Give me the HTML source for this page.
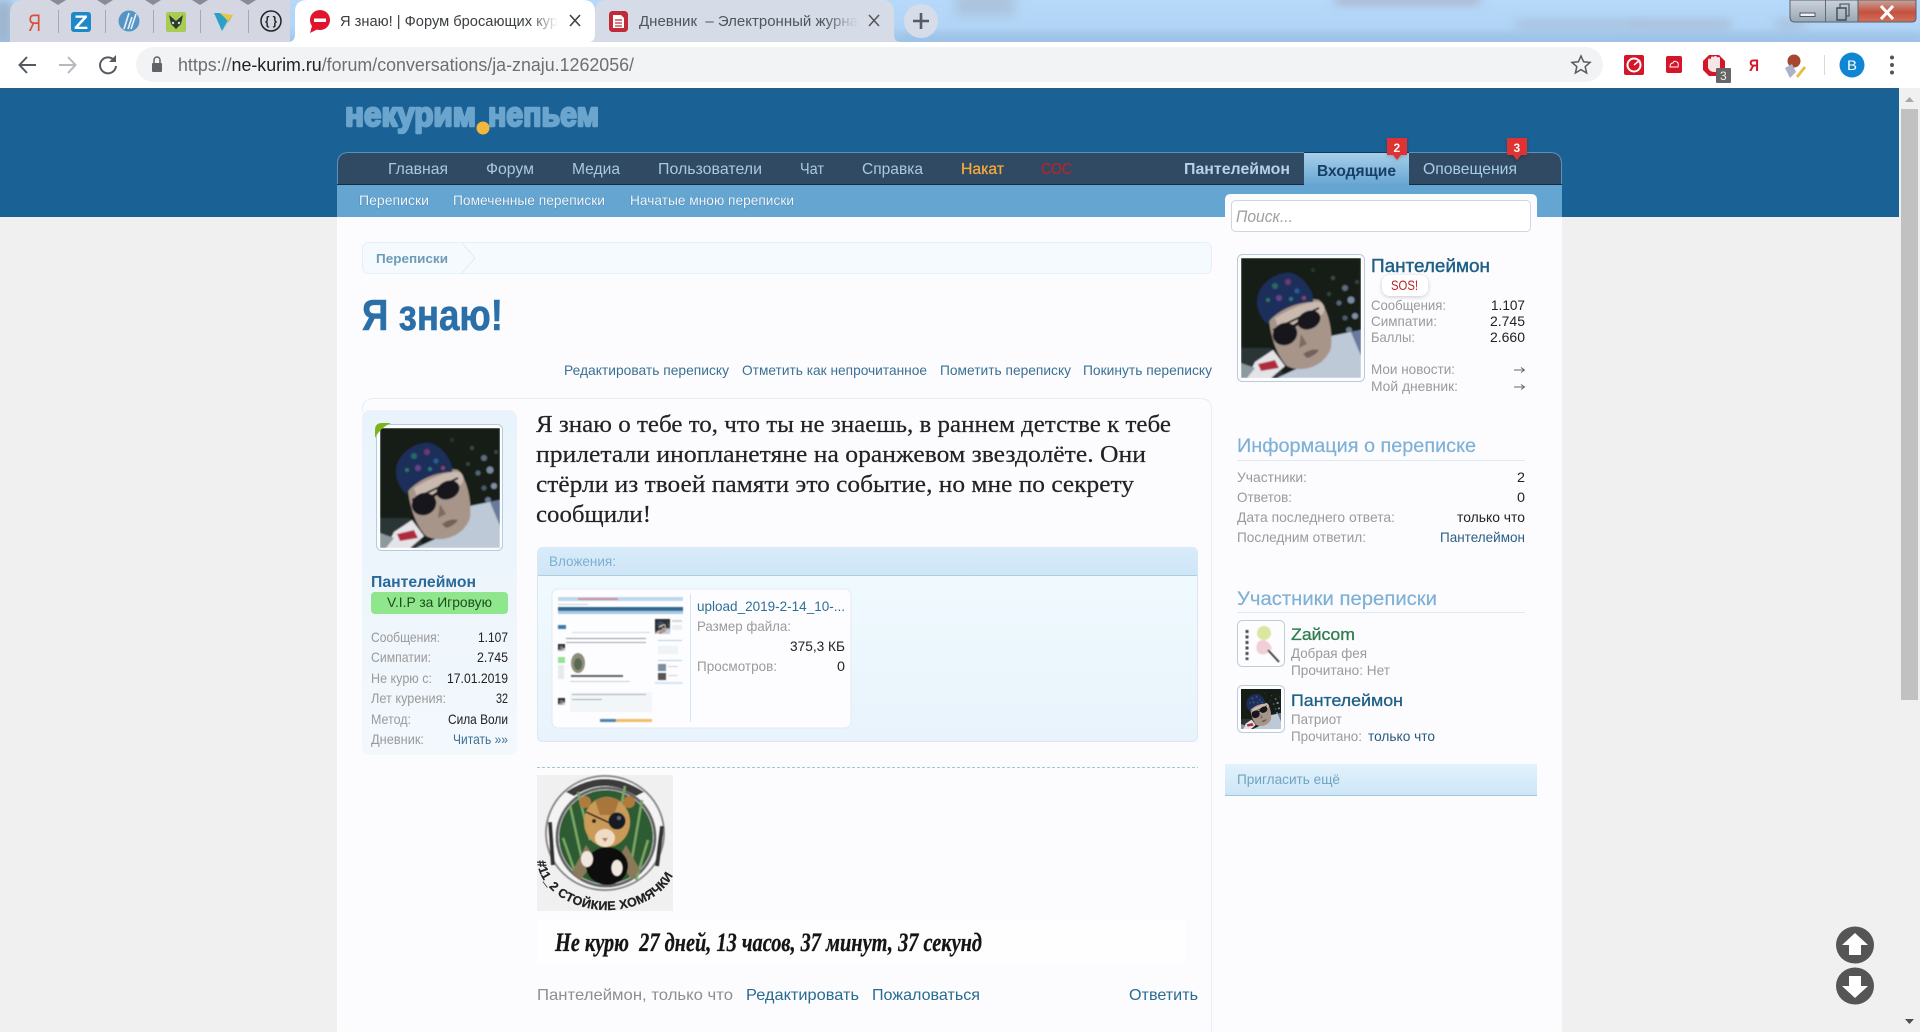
<!DOCTYPE html>
<html lang="ru"><head><meta charset="utf-8"><title>Я знаю! | Форум бросающих курить</title>
<style>
html,body{margin:0;padding:0;background:#f0f0f0;overflow:hidden;width:1920px;height:1032px}
svg{display:block}
text{font-family:"Liberation Sans","Noto Sans CJK SC",sans-serif;white-space:pre}
.g{fill:#9a9a9a;font-size:14px}.k{fill:#222;font-size:14px}.l{fill:#3a7194;font-size:14px}
.n{fill:#a9c9e1;font-size:16px}.s{fill:#f2f8fc;font-size:14px}
.h{fill:#7fb0d6;font-size:19px;stroke:#7fb0d6;stroke-width:.2}
.f{fill:#2a6a90;font-size:16px}
.m{fill:#222;font-family:"Liberation Serif",serif;font-size:24px;stroke:#222;stroke-width:.2}
</style></head><body>
<svg xmlns="http://www.w3.org/2000/svg" width="1920" height="1032" viewBox="0 0 1920 1032">
<defs>
<linearGradient id="sky" x1="0" y1="0" x2="0" y2="1"><stop offset="0" stop-color="#b6d9fa"/><stop offset=".65" stop-color="#b2d5f6"/><stop offset="1" stop-color="#9fc4e8"/></linearGradient>
<linearGradient id="inb" x1="0" y1="0" x2="0" y2="1"><stop offset="0" stop-color="#a9d0ea"/><stop offset="1" stop-color="#67a6d2"/></linearGradient>
<linearGradient id="ub" x1="0" y1="0" x2="0" y2="1"><stop offset="0" stop-color="#e8f3fb"/><stop offset="1" stop-color="#f3f8fd"/></linearGradient>
<linearGradient id="ah" x1="0" y1="0" x2="0" y2="1"><stop offset="0" stop-color="#d8ecfa"/><stop offset="1" stop-color="#cfe6f7"/></linearGradient>
<linearGradient id="ab" x1="0" y1="0" x2="0" y2="1"><stop offset="0" stop-color="#f1fbff"/><stop offset="1" stop-color="#e8f3fb"/></linearGradient>
<linearGradient id="inv" x1="0" y1="0" x2="0" y2="1"><stop offset="0" stop-color="#e2f2fc"/><stop offset="1" stop-color="#cde6f6"/></linearGradient>
<linearGradient id="close" x1="0" y1="0" x2="0" y2="1"><stop offset="0" stop-color="#c8a49c"/><stop offset=".55" stop-color="#c4523e"/><stop offset="1" stop-color="#d2705c"/></linearGradient>
<linearGradient id="win" x1="0" y1="0" x2="0" y2="1"><stop offset="0" stop-color="#ccd4dc"/><stop offset="1" stop-color="#98a6b4"/></linearGradient>
<linearGradient id="fade1" gradientUnits="userSpaceOnUse" x1="530" y1="0" x2="558" y2="0"><stop offset="0" stop-color="#3c4043"/><stop offset="1" stop-color="#ffffff"/></linearGradient>
<linearGradient id="fade2" gradientUnits="userSpaceOnUse" x1="825" y1="0" x2="858" y2="0"><stop offset="0" stop-color="#50555a"/><stop offset="1" stop-color="#d6dce7"/></linearGradient>
<filter id="b6" x="-30%" y="-200%" width="160%" height="500%"><feGaussianBlur stdDeviation="5"/></filter>
<filter id="b1" x="-10%" y="-10%" width="120%" height="120%"><feGaussianBlur stdDeviation=".8"/></filter>
<filter id="b05" x="-5%" y="-5%" width="110%" height="110%"><feGaussianBlur stdDeviation=".45"/></filter>
<filter id="sh" x="-20%" y="-30%" width="140%" height="170%"><feDropShadow dx="0" dy="1" stdDeviation="2" flood-color="#000" flood-opacity=".2"/></filter>
<symbol id="photo" viewBox="0 0 120 120">
<g filter="url(#b1)">
<rect width="120" height="120" fill="#141e15"/>
<circle cx="92" cy="20" r="2" fill="#3c4c44"/><circle cx="104" cy="30" r="3" fill="#5c6c7c"/><circle cx="110" cy="42" r="3.500" fill="#7a8aa0"/><circle cx="98" cy="45" r="2.500" fill="#55667a"/><circle cx="114" cy="58" r="3" fill="#8090a8"/><circle cx="104" cy="60" r="2.500" fill="#4c5c6c"/><circle cx="116" cy="24" r="2" fill="#34443c"/><circle cx="88" cy="36" r="2" fill="#33443a"/><circle cx="108" cy="72" r="3" fill="#6a7a94"/><circle cx="72" cy="12" r="2" fill="#28382c"/>
<path d="M0 90H30L44 120H0Z" fill="#2a3634"/>
<path d="M36 120L70 104 90 78 120 72V120Z" fill="#bdc9d7"/>
<path d="M110 74L120 98V72Z" fill="#6a7a9c"/>
<path d="M28 62C40 48 60 38 78 42 86 50 92 70 90 90 84 108 62 116 46 108 36 98 30 80 28 62Z" fill="#a8958a"/>
<path d="M34 60C50 50 70 42 80 44 86 50 84 56 76 60 60 66 46 68 38 72Z" fill="#c9b9af"/>
<path d="M16 44C16 26 36 13 50 15 62 18 74 34 72 44 56 44 36 52 26 66 20 60 16 52 16 44Z" fill="#1d2f5a"/>
<g opacity=".75"><circle cx="34" cy="28" r="3" fill="#2c7a6a"/><circle cx="47" cy="24" r="3" fill="#8a3a7a"/><circle cx="56" cy="33" r="2.500" fill="#2a6aa8"/><circle cx="38" cy="40" r="3" fill="#7a4a9a"/><circle cx="27" cy="42" r="2" fill="#3a8a5a"/><circle cx="63" cy="40" r="2" fill="#a8506a"/><circle cx="50" cy="41" r="2" fill="#2e8a8a"/></g>
<ellipse cx="44" cy="76" rx="12.500" ry="11" fill="#15151c" transform="rotate(-25 44 76)"/>
<ellipse cx="68" cy="62" rx="12" ry="9" fill="#15151c" transform="rotate(-25 68 62)"/>
<path d="M50 70L62 62" stroke="#15151c" stroke-width="3"/>
<path d="M32 72L78 50" stroke="#15151c" stroke-width="2"/>
<path d="M60 76L66 86 58 90Z" fill="#7f6a60"/>
<path d="M62 96Q70 90 78 92 74 98 66 100Z" fill="#75605a"/>
<path d="M14 104L32 92 44 108 30 120H6Z" fill="#e4e4e8"/><path d="M17 106L34 102 38 110 20 113Z" fill="#b02a3e"/>
<path d="M0 105L14 110 6 120H0Z" fill="#8c9aa0"/>
</g>
</symbol>
</defs>

<!-- page -->
<rect width="1920" height="1032" fill="#f0f0f0"/>

<!-- window top -->
<rect width="1920" height="42" fill="url(#sky)"/>
<g filter="url(#b6)">
<rect x="-6" y="0" width="18" height="42" fill="#9db4cc"/>
<rect x="955" y="-6" width="60" height="22" fill="#a8bcd2" opacity=".7"/>
<rect x="1335" y="-4" width="145" height="8" fill="#a89cb0" opacity=".75"/>
<rect x="1515" y="21" width="120" height="6" fill="#9fb2c8" opacity=".8"/>
<rect x="1630" y="21" width="100" height="6" fill="#a0a8bc" opacity=".8"/>
<rect x="1775" y="21" width="30" height="6" fill="#a0a8bc" opacity=".7"/>
<rect x="900" y="35" width="1020" height="9" fill="#9cc1e6"/>
</g>
<!-- pinned tabs -->
<path d="M10 42V14Q10 0 24 0H290V42Z" fill="#d4d7e1"/>
<path d="M50 0L58 5 66 0ZM97 0L105 5 113 0ZM145 0L153 5 161 0ZM192 0L200 5 208 0ZM240 0L248 5 256 0Z" fill="#868c9a"/>
<g stroke="#a5a9b3" stroke-width="1"><path d="M58.500 10V33M105.500 10V33M153.500 10V33M200.500 10V33M248.500 10V33"/></g>
<text x="28" y="31" font-size="24" fill="#d94f3c" textLength="13" lengthAdjust="spacingAndGlyphs">Я</text>
<rect x="71" y="12" width="20" height="20" rx="3" fill="#1e88c8"/>
<text x="74" y="29" font-size="19" font-weight="bold" fill="#fff" textLength="14" lengthAdjust="spacingAndGlyphs">Z</text>
<circle cx="129" cy="21" r="10.500" fill="#5495c4"/>
<path d="M124 29L129 13M128 29L132 17M131 29L136 14" stroke="#e8f2f8" stroke-width="1.600" fill="none"/>
<rect x="166" y="12" width="20" height="20" rx="2" fill="#a9cb55"/>
<path d="M169 15L176 21 183 15 181 24 176 29 171 24Z" fill="#2b3d2a"/><circle cx="173" cy="23" r="1.200" fill="#cde"/><circle cx="179" cy="23" r="1.200" fill="#cde"/>
<path d="M214 13L222 31 228 20 220 13Z" fill="#2aa0c8"/><path d="M220 13L233 15 229 22Z" fill="#e4c64a"/><path d="M222 31L229 20 233 15Z" fill="#58b868"/>
<circle cx="271" cy="21" r="10" fill="none" stroke="#222" stroke-width="1.500"/>
<text x="265" y="25" font-size="12" font-weight="bold" fill="#222" textLength="12" lengthAdjust="spacingAndGlyphs">{ }</text>
<!-- active tab -->
<path d="M288 42Q295 42 295 34V12Q295 0 307 0H583Q595 0 595 12V34Q595 42 602 42Z" fill="#fff"/>
<circle cx="320" cy="20" r="10" fill="#e0142c"/><path d="M312 26L310 33 318 29Z" fill="#e0142c"/><rect x="314" y="18.500" width="12" height="3.500" fill="#fff"/>
<text x="340" y="26" font-size="15" fill="url(#fade1)" textLength="218" lengthAdjust="spacingAndGlyphs">Я знаю! | Форум бросающих кур</text>
<path d="M570 15L580 26M580 15L570 26" stroke="#444" stroke-width="1.600"/>
<!-- tab 2 -->
<path d="M595 34V12Q595 0 607 0H882Q894 0 894 12V34Q894 42 901 42H588Q595 42 595 34Z" fill="#d6dce7"/>
<rect x="609" y="11" width="19" height="21" rx="3.500" fill="#c02a3a"/>
<path d="M613 15H621L624 18V28H613Z" fill="#fff"/><path d="M615 20H622M615 23H622M615 26H622" stroke="#c02a3a" stroke-width="1.200"/>
<text x="639" y="26" font-size="15" fill="url(#fade2)" textLength="219" lengthAdjust="spacingAndGlyphs">Дневник  – Электронный журна</text>
<path d="M869 15L879 26M879 15L869 26" stroke="#555" stroke-width="1.500"/>
<!-- new tab -->
<circle cx="921" cy="21" r="17" fill="#d6dde8"/>
<path d="M921 13V29M913 21H929" stroke="#555c66" stroke-width="2.600"/>
<!-- window controls -->
<path d="M1790 0V17Q1790 22 1795 22H1858V0Z" fill="url(#win)" stroke="#56626e"/>
<path d="M1858 0V22H1912Q1916 22 1916 18V0Z" fill="url(#close)" stroke="#56626e"/>
<path d="M1825.500 0V22" stroke="#5f6b78"/>
<rect x="1800" y="13" width="15" height="3.500" fill="#eef2f6" stroke="#556"/>
<path d="M1837 8H1846V20H1837Z" fill="none" stroke="#444c56" stroke-width="1.400"/>
<path d="M1840 8V4H1849V16H1846" fill="none" stroke="#444c56" stroke-width="1.100"/>
<path d="M1881 6L1893 19M1893 6L1881 19" stroke="#fff" stroke-width="3"/>

<!-- toolbar -->
<rect y="42" width="1920" height="46" fill="#fff"/>
<path d="M36 65H20M27 57L19.500 65 27 73" fill="none" stroke="#555a60" stroke-width="2"/>
<path d="M59 65H75M68 57L75.500 65 68 73" fill="none" stroke="#b6babf" stroke-width="2"/>
<path d="M114 60A8 8 0 1 0 116 66" fill="none" stroke="#555a60" stroke-width="2"/><path d="M116 55V62H109Z" fill="#555a60"/>
<rect x="136" y="47" width="1467" height="35" rx="17.500" fill="#f1f3f4"/>
<rect x="152" y="63" width="10" height="9" rx="1" fill="#5f6368"/><path d="M154 63V60A3 3 0 0 1 160 60V63" fill="none" stroke="#5f6368" stroke-width="1.500"/>
<text x="178" y="71" font-size="18" fill="#6c7074" textLength="456" lengthAdjust="spacingAndGlyphs"><tspan>https://</tspan><tspan fill="#202124">ne-kurim.ru</tspan><tspan>/forum/conversations/ja-znaju.1262056/</tspan></text>
<path d="M1581 56L1583.600 61.800 1590 62.400 1585.200 66.600 1586.600 73 1581 69.600 1575.400 73 1576.800 66.600 1572 62.400 1578.400 61.800Z" fill="none" stroke="#555a60" stroke-width="1.500"/>
<rect x="1624" y="55" width="20" height="20" rx="2" fill="#d4152a"/><circle cx="1634" cy="65" r="6.500" fill="none" stroke="#fff" stroke-width="2"/><path d="M1634 65L1640 60" stroke="#fff" stroke-width="1.500"/>
<rect x="1666" y="56" width="16" height="17" rx="2" fill="#d4152a"/><path d="M1670 67Q1670 63 1673 63 1674 60 1677 62 1679 63 1678 67Z" fill="none" stroke="#fff" stroke-width="1"/>
<path d="M1709 55H1719L1725 61V70L1719 76H1709L1703 70V61Z" fill="#d4152a"/>
<path d="M1708 64V60Q1708 58.500 1709.500 58.500 1711 58.500 1711 60V57.500Q1711 56.500 1712.500 56.500 1714 56.500 1714 57.500V57Q1714 56 1715.500 56 1717 56 1717 57.500V58Q1717 57 1718.500 57 1720 57 1720 58.500V68Q1720 72 1714 72 1710 72 1708 68Z" fill="#f6e6e6"/>
<rect x="1716" y="68" width="15" height="15" rx="1" fill="#666"/><text x="1720" y="80" font-size="12" fill="#eee">3</text>
<text x="1749" y="71" font-size="17" fill="#d4152a" font-weight="bold" textLength="10" lengthAdjust="spacingAndGlyphs">Я</text>
<circle cx="1794" cy="61" r="6.500" fill="#a8472f"/><path d="M1785 68L1792 64 1796 72 1790 78Z" fill="#a8b4cc"/><path d="M1796 76L1804 66 1806 68 1798 78Z" fill="#e0c040"/>
<path d="M1824.500 55V75" stroke="#d8dadc"/>
<circle cx="1852" cy="65" r="12.500" fill="#0e86d4"/><text x="1847" y="70" font-size="14" fill="#fff" textLength="10" lengthAdjust="spacingAndGlyphs">В</text>
<circle cx="1892" cy="57.500" r="2" fill="#555"/><circle cx="1892" cy="65" r="2" fill="#555"/><circle cx="1892" cy="72.500" r="2" fill="#555"/>

<!-- site header -->
<rect y="88" width="1899" height="129" fill="#1a6295"/>
<rect y="88" width="1899" height="1" fill="#2a5a80"/>
<!-- logo -->
<text x="345" y="126" font-size="34" font-weight="bold" fill="#6ba5cd" stroke="#6ba5cd" stroke-width="2.400" stroke-linejoin="round" textLength="131" lengthAdjust="spacingAndGlyphs">некурим</text>
<text x="488" y="126" font-size="34" font-weight="bold" fill="#6ba5cd" stroke="#6ba5cd" stroke-width="2.400" stroke-linejoin="round" textLength="111" lengthAdjust="spacingAndGlyphs">непьем</text>
<circle cx="483" cy="128" r="6.500" fill="#f5b63c"/>
<!-- nav -->
<path d="M337.500 185V164Q337.500 152.500 349 152.500H1550Q1561.500 152.500 1561.500 164V185Z" fill="#2f4a62" stroke="#5c93bd" stroke-width="1"/>
<rect x="337" y="184" width="1225" height="1.500" fill="#132c44"/>
<rect x="337" y="185" width="1225" height="32" fill="#65a5d1"/>
<text class="n" x="388" y="174" textLength="60" lengthAdjust="spacingAndGlyphs">Главная</text>
<text class="n" x="486" y="174" textLength="48" lengthAdjust="spacingAndGlyphs">Форум</text>
<text class="n" x="572" y="174" textLength="48" lengthAdjust="spacingAndGlyphs">Медиа</text>
<text class="n" x="658" y="174" textLength="104" lengthAdjust="spacingAndGlyphs">Пользователи</text>
<text class="n" x="800" y="174" textLength="24" lengthAdjust="spacingAndGlyphs">Чат</text>
<text class="n" x="862" y="174" textLength="61" lengthAdjust="spacingAndGlyphs">Справка</text>
<text x="961" y="174" font-size="16" fill="#f2a93a" stroke="#f2a93a" stroke-width=".3" textLength="43" lengthAdjust="spacingAndGlyphs">Накат</text>
<text x="1041" y="174" font-size="16" fill="#c81e28" textLength="31" lengthAdjust="spacingAndGlyphs">СОС</text>
<text x="1184" y="174" font-size="16" font-weight="bold" fill="#b5d2e8" textLength="106" lengthAdjust="spacingAndGlyphs">Пантелеймон</text>
<rect x="1304" y="152" width="105" height="33" fill="url(#inb)"/>
<path d="M1304 152.500H1409" stroke="#123a5c"/>
<text x="1317" y="176" font-size="16" font-weight="bold" fill="#173e66" textLength="79" lengthAdjust="spacingAndGlyphs">Входящие</text>
<text x="1423" y="174" font-size="16" fill="#a8cde8" textLength="94" lengthAdjust="spacingAndGlyphs">Оповещения</text>
<g filter="url(#sh)"><path d="M1387 138H1407V155H1401L1397 160 1393 155H1387Z" fill="#e03232"/><path d="M1507 138H1527V155H1521L1517 160 1513 155H1507Z" fill="#e03232"/></g>
<text x="1393.500" y="152" font-size="12" font-weight="bold" fill="#fff">2</text>
<text x="1513.500" y="152" font-size="12" font-weight="bold" fill="#fff">3</text>
<!-- subnav -->
<g style="paint-order:stroke"><text class="s" x="359" y="205" stroke="#4a88b4" stroke-width=".8" textLength="70" lengthAdjust="spacingAndGlyphs">Переписки</text>
<text class="s" x="453" y="205" stroke="#4a88b4" stroke-width=".8" textLength="152" lengthAdjust="spacingAndGlyphs">Помеченные переписки</text>
<text class="s" x="630" y="205" stroke="#4a88b4" stroke-width=".8" textLength="164" lengthAdjust="spacingAndGlyphs">Начатые мною переписки</text></g>

<!-- content -->
<rect x="337" y="217" width="1225" height="815" fill="#fcfcff"/>
<path d="M1225 217V200Q1225 194 1231 194H1531Q1537 194 1537 200V217Z" fill="#fcfcff"/>
<rect x="1231.500" y="200.500" width="299" height="31" rx="4" fill="#fff" stroke="#d0d6dc"/>
<text x="1236" y="222" font-size="17" font-style="italic" fill="#a0a0a0" textLength="57" lengthAdjust="spacingAndGlyphs">Поиск...</text>

<!-- breadcrumb -->
<rect x="362.500" y="242.500" width="849" height="31" rx="6" fill="#f5fafe" stroke="#e6f0f8"/>
<path d="M462 243L475 258 462 273" fill="none" stroke="#e2edf5"/>
<text x="376" y="263" font-size="13" font-weight="bold" fill="#6d9bb8" textLength="72" lengthAdjust="spacingAndGlyphs">Переписки</text>

<!-- title -->
<text x="362" y="330" font-size="44" font-weight="bold" fill="#2a6fa8" stroke="#2a6fa8" stroke-width=".6" textLength="141" lengthAdjust="spacingAndGlyphs">Я знаю!</text>
<text class="l" x="564" y="375" textLength="165" lengthAdjust="spacingAndGlyphs">Редактировать переписку</text>
<text class="l" x="742" y="375" textLength="185" lengthAdjust="spacingAndGlyphs">Отметить как непрочитанное</text>
<text class="l" x="940" y="375" textLength="131" lengthAdjust="spacingAndGlyphs">Пометить переписку</text>
<text class="l" x="1083" y="375" textLength="129" lengthAdjust="spacingAndGlyphs">Покинуть переписку</text>

<!-- post frame -->
<path d="M362.500 412V410Q362.500 398.500 374 398.500H1200Q1211.500 398.500 1211.500 410V1032" fill="none" stroke="#e4eff7"/>
<!-- user box -->
<rect x="362" y="410" width="155" height="345" rx="8" fill="url(#ub)"/>
<rect x="376.500" y="424.500" width="126" height="126" rx="5" fill="#fcfcff" stroke="#b8cbd8"/>
<use href="#photo" x="380" y="428" width="120" height="120"/>
<path d="M375 438V430Q375 423 382 423H391Q380 428 375 438Z" fill="#7cb518"/>
<text x="371" y="587" font-size="16" font-weight="bold" fill="#2a6a9a" textLength="105" lengthAdjust="spacingAndGlyphs">Пантелеймон</text>
<rect x="371" y="592" width="137" height="22" rx="4" fill="#8fe68c"/>
<text x="387" y="607" font-size="14" fill="#1d4d1d" textLength="105" lengthAdjust="spacingAndGlyphs">V.I.P за Игровую</text>
<text class="g" x="371" y="642" textLength="69" lengthAdjust="spacingAndGlyphs">Сообщения:</text>
<text class="k" x="478" y="642" textLength="30" lengthAdjust="spacingAndGlyphs">1.107</text>
<text class="g" x="371" y="662" textLength="60" lengthAdjust="spacingAndGlyphs">Симпатии:</text>
<text class="k" x="477" y="662" textLength="31" lengthAdjust="spacingAndGlyphs">2.745</text>
<text class="g" x="371" y="683" textLength="61" lengthAdjust="spacingAndGlyphs">Не курю с:</text>
<text class="k" x="447" y="683" textLength="61" lengthAdjust="spacingAndGlyphs">17.01.2019</text>
<text class="g" x="371" y="703" textLength="75" lengthAdjust="spacingAndGlyphs">Лет курения:</text>
<text class="k" x="496" y="703" textLength="12" lengthAdjust="spacingAndGlyphs">32</text>
<text class="g" x="371" y="724" textLength="40" lengthAdjust="spacingAndGlyphs">Метод:</text>
<text class="k" x="448" y="724" textLength="60" lengthAdjust="spacingAndGlyphs">Сила Воли</text>
<text class="g" x="371" y="744" textLength="53" lengthAdjust="spacingAndGlyphs">Дневник:</text>
<text class="l" x="453" y="744" textLength="55" lengthAdjust="spacingAndGlyphs">Читать »»</text>

<!-- message -->
<text class="m" x="536" y="432" textLength="635" lengthAdjust="spacingAndGlyphs">Я знаю о тебе то, что ты не знаешь, в раннем детстве к тебе</text>
<text class="m" x="536" y="462" textLength="610" lengthAdjust="spacingAndGlyphs">прилетали инопланетяне на оранжевом звездолёте. Они</text>
<text class="m" x="536" y="492" textLength="598" lengthAdjust="spacingAndGlyphs">стёрли из твоей памяти это событие, но мне по секрету</text>
<text class="m" x="536" y="522" textLength="115" lengthAdjust="spacingAndGlyphs">сообщили!</text>

<!-- attachments -->
<rect x="537.500" y="547.500" width="660" height="194" rx="5" fill="url(#ab)" stroke="#d9e8f2"/>
<path d="M537.500 575V552Q537.500 547.500 542 547.500H1193Q1197.500 547.500 1197.500 552V575Z" fill="url(#ah)"/>
<path d="M538 575.500H1197" stroke="#a9cfe0"/>
<text x="549" y="566" font-size="14" fill="#7cafd0" textLength="67" lengthAdjust="spacingAndGlyphs">Вложения:</text>
<rect x="552" y="589" width="299" height="139" rx="6" fill="#fdfdff" stroke="#e0ebf3"/>
<path d="M690.500 594V722" stroke="#d5e5ef"/>
<!-- thumbnail -->
<g filter="url(#b05)" opacity=".9">
<rect x="558" y="597" width="125" height="4" rx="1" fill="#b7d4ea"/><rect x="578" y="598" width="40" height="2" fill="#c8808c"/>
<rect x="558" y="604" width="30" height="1" fill="#ccc"/>
<rect x="558" y="607" width="125" height="4" fill="#1e5a85"/><rect x="558" y="611" width="125" height="3" fill="#9cc4e2"/>
<use href="#photo" x="655" y="619" width="15" height="15"/>
<rect x="672" y="620" width="10" height="2" fill="#c8d2da"/><rect x="672" y="625" width="10" height="5" fill="#e8edf0"/>
<rect x="558" y="625" width="8" height="4" fill="#2a6fa8"/>
<rect x="572" y="632" width="78" height="1" fill="#c4d6e2"/>
<rect x="566" y="638" width="80" height="1" fill="#888c92"/><rect x="566" y="642" width="80" height="1" fill="#9a9ea4"/>
<rect x="658" y="640" width="24" height="1" fill="#a8cce4"/><rect x="658" y="646" width="20" height="8" fill="#eef2f4"/>
<use href="#photo" x="558" y="640" width="7" height="15"/>
<rect x="558" y="657" width="7" height="6" fill="#8ae08c"/>
<rect x="558" y="665" width="6" height="14" fill="#e2eaee"/>
<ellipse cx="578" cy="663" rx="7" ry="10" fill="#82846c"/><ellipse cx="578" cy="664" rx="4" ry="6" fill="#4a5a40"/>
<rect x="571" y="675" width="52" height="2" fill="#555"/>
<rect x="570" y="681" width="60" height="1" fill="#c0ccd6"/>
<rect x="658" y="660" width="24" height="1" fill="#a8cce4"/><rect x="658" y="664" width="8" height="7" fill="#6e8494"/><rect x="658" y="673" width="8" height="7" fill="#444"/><rect x="668" y="666" width="10" height="1" fill="#ccc"/><rect x="668" y="675" width="10" height="1" fill="#ccc"/>
<rect x="655" y="682" width="28" height="2" fill="#cfe4f2"/>
<use href="#photo" x="558" y="694" width="7" height="15"/>
<rect x="570" y="692" width="82" height="20" fill="#f2f6f9"/><g fill="#999"><rect x="572" y="694" width="74" height="1"/><rect x="572" y="699" width="30" height="1"/></g>
<rect x="600" y="719" width="16" height="3" fill="#3c7aa0"/><rect x="616" y="719" width="36" height="3" fill="#f0b858"/>
</g>
<text x="697" y="611" font-size="14" fill="#2e6f95" textLength="148" lengthAdjust="spacingAndGlyphs">upload_2019-2-14_10-...</text>
<text class="g" x="697" y="631" textLength="94" lengthAdjust="spacingAndGlyphs">Размер файла:</text>
<text class="k" x="790" y="651" textLength="55" lengthAdjust="spacingAndGlyphs">375,3 КБ</text>
<text class="g" x="697" y="671" textLength="80" lengthAdjust="spacingAndGlyphs">Просмотров:</text>
<text class="k" x="837" y="671" textLength="8" lengthAdjust="spacingAndGlyphs">0</text>

<path d="M537 767.500H1198" stroke="#9fc9d4" stroke-dasharray="3 2"/>

<!-- hamster signature -->
<rect x="537" y="775" width="136" height="136" fill="#f0f0f0"/>
<g filter="url(#b05)">
<ellipse cx="605" cy="833" rx="59" ry="57" fill="#f4f4f4" stroke="#8a8a8a" stroke-width="2"/>
<path d="M566 792Q605 766 644 792L636 796Q605 776 574 796Z" fill="#3a3a3a"/>
<path d="M553 865L550 822" stroke="#333" stroke-width="4"/>
<path d="M657 866L662 826" stroke="#333" stroke-width="4"/>
<ellipse cx="606" cy="837" rx="49" ry="49" fill="none" stroke="#666" stroke-width="3"/>
<ellipse cx="606" cy="837" rx="47" ry="47" fill="#2f5c33"/>
<path d="M570 805L582 860M642 800L630 870M578 792L590 840M563 838L575 872M648 840L636 880M625 786L620 812" stroke="#79a565" stroke-width="2.500"/>
<path d="M586 845L572 872 580 880 596 860ZM626 845L640 870 632 880 618 860Z" fill="#8a7a5a"/>
<circle cx="585" cy="802" r="6" fill="#b07a3c"/><circle cx="629" cy="802" r="6" fill="#b07a3c"/>
<ellipse cx="607" cy="822" rx="23" ry="25" fill="#c99a58"/>
<path d="M595 800Q607 795 619 800L614 815 600 815Z" fill="#a8743a"/>
<ellipse cx="605" cy="838" rx="10" ry="9" fill="#f0dcc4"/>
<path d="M602 838H608L605 842Z" fill="#c07070"/>
<path d="M586 812L612 824" stroke="#111" stroke-width="1.500"/>
<circle cx="617" cy="821" r="8.500" fill="#191d24"/>
<circle cx="619" cy="818" r="2" fill="#667"/>
<circle cx="594" cy="821" r="2" fill="#222"/>
<ellipse cx="607" cy="866" rx="21" ry="19" fill="#0c0c0c"/>
<ellipse cx="587" cy="859" rx="6" ry="8" fill="#f0e8e0"/>
<ellipse cx="617" cy="868" rx="5.500" ry="8" fill="#efe8e0"/>
</g>
<path id="arc" d="M537 858A70 52 0 0 0 677 858" fill="none"/>
<text font-size="12.500" font-weight="bold" fill="#222" stroke="#222" stroke-width=".25" letter-spacing=".4"><textPath href="#arc" startOffset="3">#11_2 СТОЙКИЕ ХОМЯЧКИ</textPath></text>
<rect x="537" y="920" width="648" height="45" fill="#fefefe" opacity=".8"/>
<text x="555" y="951" font-size="26" font-weight="bold" font-style="italic" fill="#151515" stroke="#151515" stroke-width=".3" textLength="427" lengthAdjust="spacingAndGlyphs" style="font-family:'Liberation Serif',serif">Не курю  27 дней, 13 часов, 37 минут, 37 секунд</text>

<!-- post footer -->
<text x="537" y="1000" font-size="16" fill="#8e8e8e" textLength="196" lengthAdjust="spacingAndGlyphs">Пантелеймон, только что</text>
<text class="f" x="746" y="1000" textLength="113" lengthAdjust="spacingAndGlyphs">Редактировать</text>
<text class="f" x="872" y="1000" textLength="108" lengthAdjust="spacingAndGlyphs">Пожаловаться</text>
<text class="f" x="1129" y="1000" textLength="69" lengthAdjust="spacingAndGlyphs">Ответить</text>

<!-- sidebar profile -->
<rect x="1237.500" y="254.500" width="127" height="127" rx="5" fill="#fcfcff" stroke="#b8cbd8"/>
<use href="#photo" x="1241" y="258" width="120" height="120"/>
<text x="1371" y="272" font-size="18" fill="#1f5f85" stroke="#1f5f85" stroke-width=".4" textLength="119" lengthAdjust="spacingAndGlyphs">Пантелеймон</text>
<rect x="1382" y="275" width="46" height="21" rx="8" fill="#fff" filter="url(#sh)"/>
<text x="1391" y="290" font-size="14" fill="#b82222" textLength="27" lengthAdjust="spacingAndGlyphs">SOS!</text>
<text class="g" x="1371" y="310" textLength="75" lengthAdjust="spacingAndGlyphs">Сообщения:</text>
<text class="k" x="1491" y="310" textLength="34" lengthAdjust="spacingAndGlyphs">1.107</text>
<text class="g" x="1371" y="326" textLength="66" lengthAdjust="spacingAndGlyphs">Симпатии:</text>
<text class="k" x="1490" y="326" textLength="35" lengthAdjust="spacingAndGlyphs">2.745</text>
<text class="g" x="1371" y="342" textLength="44" lengthAdjust="spacingAndGlyphs">Баллы:</text>
<text class="k" x="1490" y="342" textLength="35" lengthAdjust="spacingAndGlyphs">2.660</text>
<text class="g" x="1371" y="374" textLength="84" lengthAdjust="spacingAndGlyphs">Мои новости:</text>
<text class="g" x="1371" y="391" textLength="87" lengthAdjust="spacingAndGlyphs">Мой дневник:</text>
<path d="M1514 370H1524M1521 367.500L1524.500 370 1521 372.500M1514 387H1524M1521 384.500L1524.500 387 1521 389.500" fill="none" stroke="#666" stroke-width="1"/>

<!-- info -->
<text class="h" x="1237" y="452" textLength="239" lengthAdjust="spacingAndGlyphs">Информация о переписке</text>
<path d="M1237 460.500H1525" stroke="#dde9f3"/>
<text class="g" x="1237" y="482" textLength="70" lengthAdjust="spacingAndGlyphs">Участники:</text>
<text class="k" x="1517" y="482" textLength="8" lengthAdjust="spacingAndGlyphs">2</text>
<text class="g" x="1237" y="502" textLength="55" lengthAdjust="spacingAndGlyphs">Ответов:</text>
<text class="k" x="1517" y="502" textLength="8" lengthAdjust="spacingAndGlyphs">0</text>
<text class="g" x="1237" y="522" textLength="158" lengthAdjust="spacingAndGlyphs">Дата последнего ответа:</text>
<text class="k" x="1457" y="522" textLength="68" lengthAdjust="spacingAndGlyphs">только что</text>
<text class="g" x="1237" y="542" textLength="129" lengthAdjust="spacingAndGlyphs">Последним ответил:</text>
<text class="l" x="1440" y="542" textLength="85" lengthAdjust="spacingAndGlyphs" style="fill:#2a5f85">Пантелеймон</text>

<!-- participants -->
<text class="h" x="1237" y="605" textLength="200" lengthAdjust="spacingAndGlyphs">Участники переписки</text>
<path d="M1237 612.500H1525" stroke="#dde9f3"/>
<rect x="1237.500" y="620.500" width="47" height="46" rx="5" fill="#fdfdff" stroke="#bccdd8"/>
<g filter="url(#b05)"><path d="M1247 630V660" stroke="#444" stroke-width="3" stroke-dasharray="3 2.500"/>
<circle cx="1264" cy="633" r="7" fill="#dbe6a0"/><path d="M1258 642Q1266 636 1272 648 1268 656 1260 654 1254 650 1258 642Z" fill="#f0cfd8"/><path d="M1268 650L1279 662" stroke="#444" stroke-width="2"/></g>
<rect x="1237.500" y="685.500" width="47" height="47" rx="5" fill="#fdfdff" stroke="#bccdd8"/>
<use href="#photo" x="1241" y="689" width="40" height="40"/>
<text x="1291" y="640" font-size="17" fill="#2e7d4e" stroke="#2e7d4e" stroke-width=".3" textLength="64" lengthAdjust="spacingAndGlyphs">Zайcom</text>
<text class="g" x="1291" y="658" textLength="76" lengthAdjust="spacingAndGlyphs">Добрая фея</text>
<text class="g" x="1291" y="675" textLength="99" lengthAdjust="spacingAndGlyphs">Прочитано: Нет</text>
<text x="1291" y="706" font-size="17" fill="#1f5f85" stroke="#1f5f85" stroke-width=".3" textLength="112" lengthAdjust="spacingAndGlyphs">Пантелеймон</text>
<text class="g" x="1291" y="724" textLength="51" lengthAdjust="spacingAndGlyphs">Патриот</text>
<text class="g" x="1291" y="741" textLength="71" lengthAdjust="spacingAndGlyphs">Прочитано:</text>
<text class="l" x="1368" y="741" textLength="67" lengthAdjust="spacingAndGlyphs" style="fill:#27597a">только что</text>

<rect x="1225" y="764" width="312" height="31" fill="url(#inv)"/>
<path d="M1225 795.500H1537" stroke="#9cc8dc"/>
<text x="1237" y="784" font-size="14" fill="#6fa3c0" textLength="103" lengthAdjust="spacingAndGlyphs">Пригласить ещё</text>

<!-- scroll buttons -->
<ellipse cx="1855" cy="945" rx="19" ry="18.500" fill="#555"/>
<path d="M1855 933L1868 945H1861V955H1849V945H1842Z" fill="#fff"/>
<ellipse cx="1855" cy="986" rx="19" ry="18.500" fill="#555"/>
<path d="M1855 998L1868 986H1861V976H1849V986H1842Z" fill="#fff"/>

<!-- scrollbar -->
<rect x="1899" y="88" width="21" height="944" fill="#f0f0f0"/>
<rect x="1901" y="109" width="17" height="591" fill="#c1c1c1"/>
<path d="M1909.500 97L1914 102H1905Z" fill="#a8a8a8"/>
<path d="M1909.500 1024L1914 1019H1905Z" fill="#505050"/>
</svg>
</body></html>
